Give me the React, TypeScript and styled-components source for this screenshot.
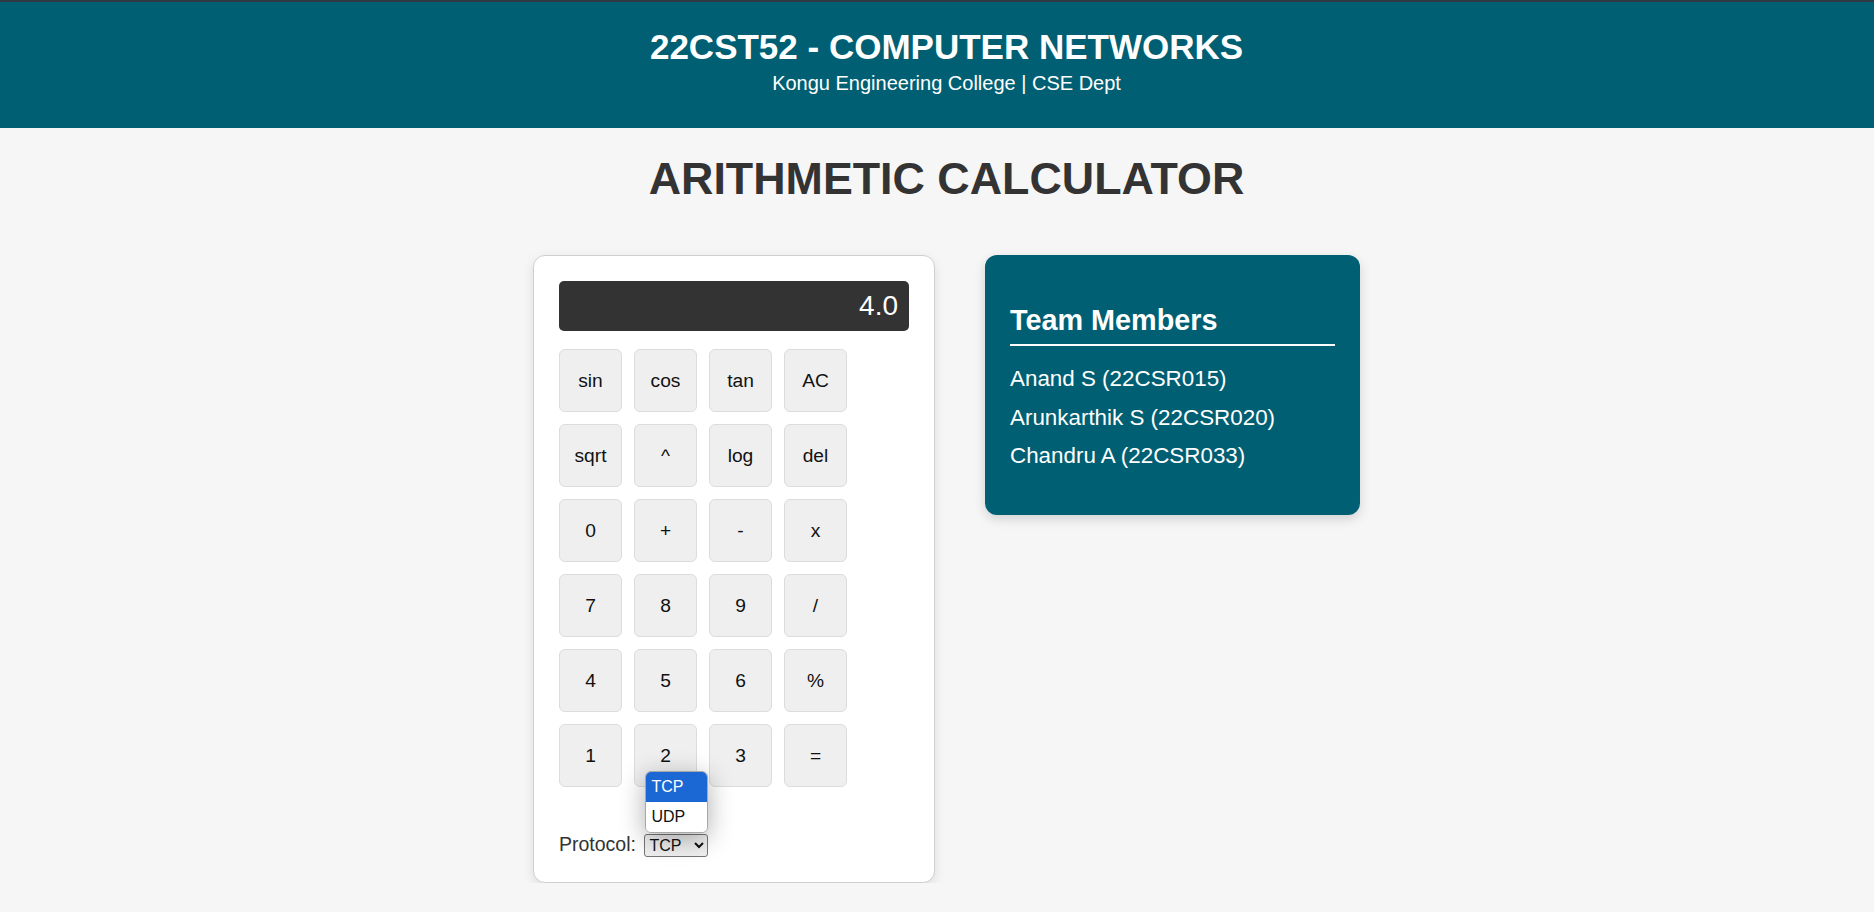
import React from "react";
import styled, { createGlobalStyle } from "styled-components";

const GlobalStyle = createGlobalStyle`
  html, body {
    margin: 0;
    padding: 0;
    background: #f6f6f6;
    font-family: "Liberation Sans", Arial, sans-serif;
  }
`;

const Header = styled.header`
  background: #005f73;
  border-top: 2px solid #2f3a44;
  color: #ffffff;
  text-align: center;
  padding: 25px 0 33px 19px;
`;

const HeaderTitle = styled.h1`
  margin: 0;
  font-size: 35px;
  line-height: 40px;
  font-weight: bold;
`;

const HeaderSub = styled.p`
  margin: 5px 0 0;
  font-size: 20px;
  line-height: 23px;
`;

const PageTitle = styled.h2`
  margin: 25px 0 50.5px;
  padding-left: 19px;
  font-size: 44.8px;
  line-height: 51.5px;
  font-weight: bold;
  color: #333333;
  text-align: center;
`;

const Content = styled.main`
  display: flex;
  justify-content: center;
  align-items: flex-start;
  gap: 50px;
  padding-left: 19px;
`;

const CalcCard = styled.section`
  width: 350px;
  padding: 25px;
  background: #ffffff;
  border: 1px solid #cfcfcf;
  border-radius: 12px;
  box-shadow: 0 4px 12px rgba(0, 0, 0, 0.1);
`;

const Display = styled.div`
  box-sizing: border-box;
  height: 50px;
  padding: 0 11px;
  background: #333333;
  color: #ffffff;
  border-radius: 5px;
  font-size: 28px;
  line-height: 50px;
  text-align: right;
`;

const Keypad = styled.div`
  display: grid;
  grid-template-columns: repeat(4, 63px);
  grid-auto-rows: 63px;
  gap: 12px;
  margin-top: 18px;
`;

const Key = styled.button`
  box-sizing: border-box;
  margin: 0;
  padding: 0;
  background: #efefef;
  border: 1px solid #dcdcdc;
  border-radius: 6px;
  font-family: "Liberation Sans", Arial, sans-serif;
  font-size: 19.2px;
  color: #111111;
`;

const ProtocolRow = styled.div`
  margin-top: 45px;
  font-size: 19.5px;
  line-height: 24px;
  color: #333333;
`;

const SelectWrap = styled.span`
  position: relative;
  display: inline-flex;
  margin-left: 3px;
`;

const ProtocolSelect = styled.select`
  font-family: "Liberation Sans", Arial, sans-serif;
  font-size: 16px;
  height: 23px;
  width: 64px;
  color: #111111;
  background: #f0f0f0;
  border: 1px solid #767676;
  border-radius: 3px;
`;

const Popup = styled.div`
  position: absolute;
  left: 1px;
  bottom: calc(100% + 1px);
  width: 61px;
  background: #ffffff;
  border: 1px solid #a8a8a8;
  border-radius: 6px;
  overflow: hidden;
  box-shadow: 0 6px 26px rgba(0, 0, 0, 0.32);
`;

const PopupOption = styled.div<{ $active?: boolean }>`
  height: 30px;
  line-height: 30px;
  padding-left: 5px;
  font-size: 16px;
  background: ${(p) => (p.$active ? "#1b67d3" : "#ffffff")};
  color: ${(p) => (p.$active ? "#ffffff" : "#111111")};
`;

const TeamCard = styled.section`
  width: 325px;
  padding: 25px;
  background: #005f73;
  color: #ffffff;
  border-radius: 12px;
  box-shadow: 0 4px 12px rgba(0, 0, 0, 0.15);
`;

const TeamHeading = styled.h3`
  margin: 24px 0 20px;
  padding-bottom: 7px;
  border-bottom: 2px solid #ffffff;
  font-size: 28.8px;
  line-height: 33px;
  font-weight: bold;
`;

const MemberList = styled.ul`
  list-style: none;
  margin: 0 0 21px;
  padding: 0;
  display: flex;
  flex-direction: column;
  gap: 12.5px;
`;

const Member = styled.li`
  font-size: 22.4px;
  line-height: 26px;
`;

const keys = [
  "sin", "cos", "tan", "AC",
  "sqrt", "^", "log", "del",
  "0", "+", "-", "x",
  "7", "8", "9", "/",
  "4", "5", "6", "%",
  "1", "2", "3", "=",
];

const members = [
  "Anand S (22CSR015)",
  "Arunkarthik S (22CSR020)",
  "Chandru A (22CSR033)",
];

export default function App() {
  return (
    <>
      <GlobalStyle />
      <Header>
        <HeaderTitle>22CST52 - COMPUTER NETWORKS</HeaderTitle>
        <HeaderSub>Kongu Engineering College | CSE Dept</HeaderSub>
      </Header>
      <PageTitle>ARITHMETIC CALCULATOR</PageTitle>
      <Content>
        <CalcCard>
          <Display>4.0</Display>
          <Keypad>
            {keys.map((k) => (
              <Key key={k}>{k}</Key>
            ))}
          </Keypad>
          <ProtocolRow>
            Protocol:{" "}
            <SelectWrap>
              <ProtocolSelect defaultValue="TCP">
                <option value="TCP">TCP</option>
                <option value="UDP">UDP</option>
              </ProtocolSelect>
              <Popup>
                <PopupOption $active>TCP</PopupOption>
                <PopupOption>UDP</PopupOption>
              </Popup>
            </SelectWrap>
          </ProtocolRow>
        </CalcCard>
        <TeamCard>
          <TeamHeading>Team Members</TeamHeading>
          <MemberList>
            {members.map((m) => (
              <Member key={m}>{m}</Member>
            ))}
          </MemberList>
        </TeamCard>
      </Content>
    </>
  );
}
